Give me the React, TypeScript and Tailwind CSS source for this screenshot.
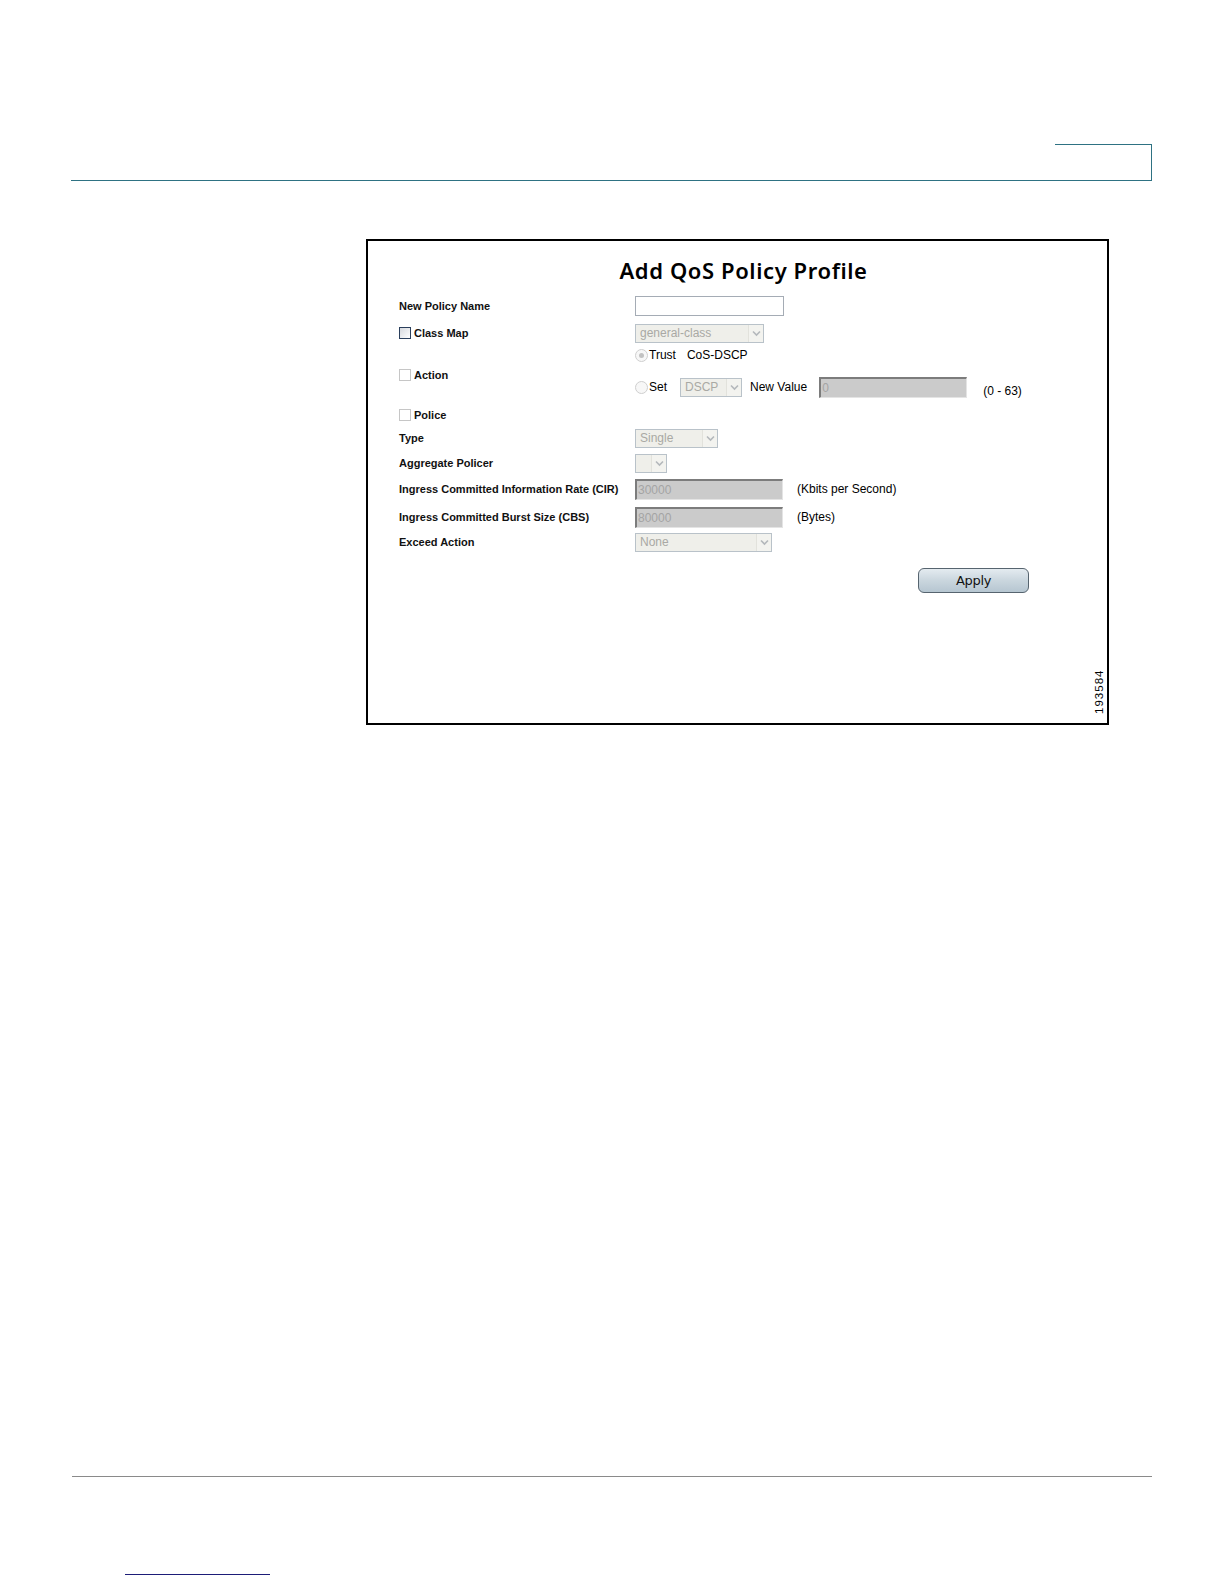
import React from 'react';

const Chevron = () => (
  <svg width="9" height="7" viewBox="0 0 9 7" className="block">
    <path d="M1 1.5 L4.5 5 L8 1.5" fill="none" stroke="#b4b8bc" strokeWidth="1.6" />
  </svg>
);

const Select = ({ value, width }: { value: string; width: string }) => (
  <div className={`${width} h-[19px] flex border border-[#b9c2c9] bg-[#efefea]`}>
    <div className="flex-1 pl-[4px] text-[12px] leading-[17px] text-[#a9a9a4] whitespace-nowrap overflow-hidden">
      {value}
    </div>
    <div className="w-[15px] flex items-center justify-center border-l border-[#e2e2dc] bg-[#f3f3ef]">
      <Chevron />
    </div>
  </div>
);

const DisabledInput = ({ value, width }: { value: string; width: string }) => (
  <div
    className={`${width} h-[21px] bg-[#cbcbcb] border-t-2 border-l-2 border-[#7c7c7c] border-r border-b border-r-[#e4e4e4] border-b-[#e4e4e4] pl-[1px] text-[12px] leading-[18px] text-[#a4a4a4]`}
  >
    {value}
  </div>
);

const Check = ({ active }: { active?: boolean }) => (
  <span
    className={`inline-block w-[12px] h-[12px] mr-[3px] ${
      active
        ? 'border border-[#2a3f5c] bg-gradient-to-br from-[#d6d9de] to-[#ffffff]'
        : 'border border-[#c6c6c6] bg-white'
    }`}
  />
);

const Radio = ({ dot }: { dot?: boolean }) => (
  <span className="inline-flex w-[13px] h-[13px] rounded-full border border-[#cfcfcf] bg-[#f7f7f7] items-center justify-center mr-[1px]">
    {dot && <span className="w-[5px] h-[5px] rounded-full bg-[#c2c2c2]" />}
  </span>
);

const Label = ({ children }: { children: React.ReactNode }) => (
  <div className="w-[236px] flex items-center text-[11px] font-bold text-[#111] whitespace-nowrap tracking-[0px]">
    {children}
  </div>
);

export default function App() {
  return (
    <div className="w-[1224px] h-[1584px] bg-white relative font-['Liberation_Sans',Arial,sans-serif] text-black overflow-hidden">
      {/* page header */}
      <div className="ml-[71px] mr-[72px] pt-[144px]">
        <div className="flex justify-end border-b border-[#2e7283]">
          <div className="w-[97px] h-[36px] border-t border-r border-[#2e7283]" />
        </div>
      </div>

      {/* figure */}
      <div className="ml-[366px] mt-[58px] w-[743px] h-[486px] border-2 border-black relative">
        <div className="pt-[15px] pl-[12px] text-center text-[22px] leading-[28px] font-semibold font-['Noto_Sans',sans-serif] tracking-[0.6px]">
          Add QoS Policy Profile
        </div>

        <div className="pl-[31px] pt-[10px]">
          {/* New Policy Name */}
          <div className="flex h-[24px]">
            <Label>New Policy Name</Label>
            <div className="flex items-center">
              <div className="w-[149px] h-[20px] border border-[#a5acb5] bg-white" />
            </div>
          </div>

          {/* Class Map */}
          <div className="flex h-[30px]">
            <Label>
              <Check active />
              Class Map
            </Label>
            <div className="flex items-center">
              <Select value="general-class" width="w-[129px]" />
            </div>
          </div>

          {/* Trust */}
          <div className="flex h-[14px]">
            <div className="w-[236px]" />
            <div className="flex items-center text-[12px]">
              <Radio dot />
              <span>Trust</span>
              <span className="ml-[11px]">CoS-DSCP</span>
            </div>
          </div>

          {/* Action / Set */}
          <div className="flex h-[42px]">
            <div className="w-[236px] pt-[5px] h-[14px]">
              <Label>
                <Check />
                Action
              </Label>
            </div>
            <div className="flex items-end pb-[4px]">
              <div className="flex items-center text-[12px]">
                <Radio />
                <span>Set</span>
                <div className="ml-[13px]">
                  <Select value="DSCP" width="w-[62px]" />
                </div>
                <span className="ml-[8px]">New Value</span>
                <div className="ml-[12px]">
                  <DisabledInput value="0" width="w-[148px]" />
                </div>
                <span className="ml-[16px] mt-[8px]">(0 - 63)</span>
              </div>
            </div>
          </div>

          {/* Police */}
          <div className="flex h-[22px]">
            <Label>
              <Check />
              Police
            </Label>
          </div>

          {/* Type */}
          <div className="flex h-[24px]">
            <Label>Type</Label>
            <div className="flex items-center">
              <Select value="Single" width="w-[83px]" />
            </div>
          </div>

          {/* Aggregate Policer */}
          <div className="flex h-[26px]">
            <Label>Aggregate Policer</Label>
            <div className="flex items-center">
              <Select value="" width="w-[32px]" />
            </div>
          </div>

          {/* CIR */}
          <div className="flex h-[26px]">
            <Label>Ingress Committed Information Rate (CIR)</Label>
            <div className="flex items-center text-[12px]">
              <DisabledInput value="30000" width="w-[148px]" />
              <span className="ml-[14px]">(Kbits per Second)</span>
            </div>
          </div>

          {/* CBS */}
          <div className="flex h-[30px]">
            <Label>Ingress Committed Burst Size (CBS)</Label>
            <div className="flex items-center text-[12px]">
              <DisabledInput value="80000" width="w-[148px]" />
              <span className="ml-[14px]">(Bytes)</span>
            </div>
          </div>

          {/* Exceed Action */}
          <div className="flex h-[20px]">
            <Label>Exceed Action</Label>
            <div className="flex items-center">
              <Select value="None" width="w-[137px]" />
            </div>
          </div>
        </div>

        <div className="flex justify-end pr-[78px] mt-[16px]">
          <button className="w-[111px] h-[25px] rounded-[6px] border border-[#56646f] bg-gradient-to-b from-[#e4ebf0] via-[#cad6de] to-[#b6c6d1] text-[13px] leading-[22px] text-[#111] font-['DejaVu_Sans',sans-serif] tracking-[-0.3px]">
            Apply
          </button>
        </div>

        {/* figure number */}
        <div className="absolute right-[0px] bottom-[8px] w-[14px] h-[46px] flex items-center justify-center">
          <span className="block -rotate-90 whitespace-nowrap text-[11.5px] tracking-[1px] leading-none">
            193584
          </span>
        </div>
      </div>

      {/* page footer */}
      <div className="ml-[72px] mr-[72px] mt-[751px] border-t border-[#8a8a8a]" />
      <div className="ml-[125px] mt-[97px] w-[145px] border-t border-[#1d1d78]" />
    </div>
  );
}
